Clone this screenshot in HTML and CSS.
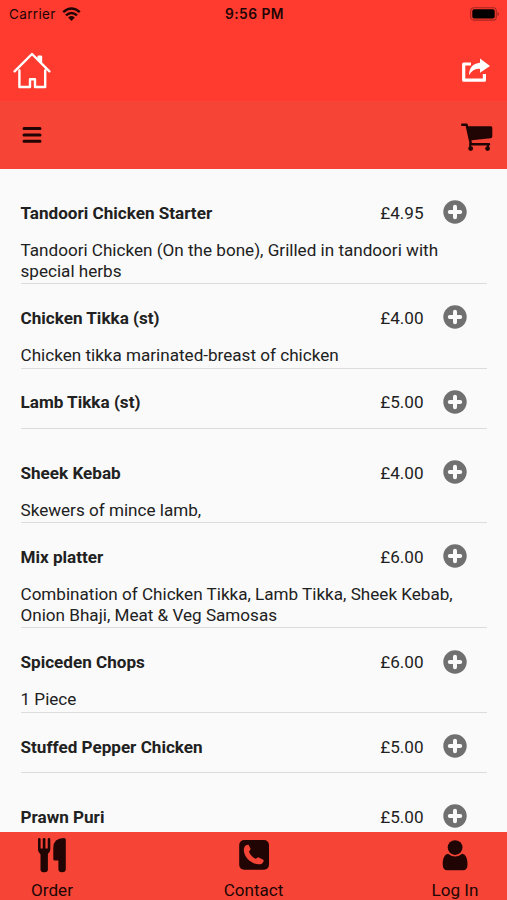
FILE: index.html
```html
<!DOCTYPE html>
<html lang="en">
<head>
<meta charset="utf-8">
<title>Menu</title>
<link rel="stylesheet" href="styles.css">
</head>
<body>
<svg class="defs" aria-hidden="true">
  <symbol id="plus" viewBox="0 0 24 24"><circle cx="12" cy="12" r="11.7" fill="#707070"/><path d="M12 6.8v10.4M6.8 12h10.4" stroke="#fafafa" stroke-width="4" stroke-linecap="round"/></symbol>
</svg>
<div class="app">
  <header class="top">
    <div class="status">
      <div class="carrier"><span>Carrier</span>
        <svg width="19" height="14" viewBox="0 0 19 14" fill="none" stroke="#210504" stroke-width="2.5"><path d="M1.2 5.1Q9.5-2.1 17.8 5.1M4 8.4Q9.5 3.6 15 8.4"/><path d="M6.2 10.5Q9.5 7.7 12.8 10.5L9.5 13.9Z" fill="#210504" stroke="none"/></svg>
      </div>
      <div class="time">9:56 PM</div>
      <svg class="battery" width="30" height="14" viewBox="0 0 30 14"><rect x=".7" y=".7" width="25.6" height="12.4" rx="3.2" fill="none" stroke="#a32720" stroke-width="1.1"/><rect x="2.3" y="2.3" width="22.4" height="9.2" rx="1.8" fill="#000"/><path d="M27.5 4.7q3.4 2.3 0 4.6z" fill="#a32720"/></svg>
    </div>
    <div class="nav">
      <svg width="38" height="37" viewBox="0 0 38 37" fill="none" stroke="#fff" stroke-width="2.4" stroke-linecap="round" stroke-linejoin="round"><path d="M1.6 19.3 19 2 36.4 19.3M28 10.5V4.8H25.6V8M6.4 18.5V35H17V27.2H22V35H32.2V18.5"/></svg>
      <svg width="29" height="25" viewBox="0 0 29 25"><path d="M10 6H2.7V22.2H23.4V16" fill="none" stroke="#fff" stroke-width="3.2" stroke-linejoin="round"/><path d="M19 .5 29 8 19 14.8V10.9C14 10.3 10.7 12.5 8 17.3 8 10 11.8 5.5 19 4.8Z" fill="#fff"/></svg>
    </div>
  </header>
  <div class="toolbar">
    <svg width="20" height="18" viewBox="0 0 20 18" stroke="#210504" stroke-width="3" stroke-linecap="round"><path d="M2 2.6h16M2 8.9h16M2 15.2h16"/></svg>
    <svg class="cart" width="33" height="29" viewBox="0 0 33 29"><path d="M2.2 1.8H6.6L11 21.3H29" fill="none" stroke="#210504" stroke-width="2.5" stroke-linecap="round" stroke-linejoin="round"/><path d="M6.8 3.2H31Q32.4 3.3 32.3 5V13.5Q32.2 15 30.6 15.2L9.5 17.5Z" fill="#210504"/><path d="M10.2 20V25M28 21.3V25" stroke="#210504" stroke-width="2"/><circle cx="10.7" cy="25.6" r="2.4" fill="#210504"/><circle cx="27.6" cy="25.6" r="2.4" fill="#210504"/></svg>
  </div>
  <main class="list">
    <section class="item"><div class="row"><h2>Tandoori Chicken Starter</h2><span class="price">£4.95</span><svg class="add"><use href="#plus"/></svg></div><p>Tandoori Chicken (On the bone), Grilled in tandoori with<br>special herbs</p></section>
    <section class="item"><div class="row"><h2>Chicken Tikka (st)</h2><span class="price">£4.00</span><svg class="add"><use href="#plus"/></svg></div><p>Chicken tikka marinated-breast of chicken</p></section>
    <section class="item bare"><div class="row"><h2>Lamb Tikka (st)</h2><span class="price">£5.00</span><svg class="add"><use href="#plus"/></svg></div></section>
    <section class="item"><div class="row"><h2>Sheek Kebab</h2><span class="price">£4.00</span><svg class="add"><use href="#plus"/></svg></div><p>Skewers of mince lamb,</p></section>
    <section class="item"><div class="row"><h2>Mix platter</h2><span class="price">£6.00</span><svg class="add"><use href="#plus"/></svg></div><p>Combination of Chicken Tikka, Lamb Tikka, Sheek Kebab,<br>Onion Bhaji, Meat &amp; Veg Samosas</p></section>
    <section class="item"><div class="row"><h2>Spiceden Chops</h2><span class="price">£6.00</span><svg class="add"><use href="#plus"/></svg></div><p>1 Piece</p></section>
    <section class="item bare"><div class="row"><h2>Stuffed Pepper Chicken</h2><span class="price">£5.00</span><svg class="add"><use href="#plus"/></svg></div></section>
    <section class="item bare"><div class="row"><h2>Prawn Puri</h2><span class="price">£5.00</span><svg class="add"><use href="#plus"/></svg></div></section>
  </main>
  <footer class="tabs">
    <div class="tab">
      <svg width="34" height="36" viewBox="0 0 34 36" fill="#210504"><path d="M4.3 2.3V12Q4.3 15 7 16.5H11Q14 15 14 12V2.3" fill="none" stroke="#210504" stroke-width="2.6" stroke-linecap="round"/><path d="M4.5 11.5h9.3L12.5 17H5.8Z"/><path d="M9.1 2.3V14" stroke="#210504" stroke-width="2.7" stroke-linecap="round"/><rect x="5.5" y="14" width="7.4" height="21.3" rx="3"/><path d="M29 1Q30.8 1 30.8 3V32Q30.8 35.3 27.1 35.3T23.4 32V23.5H20Q18.3 23.5 18.3 22V11Q18.3 1 29 1Z"/></svg>
      <span>Order</span>
    </div>
    <div class="tab">
      <svg width="34" height="36" viewBox="0 0 34 36"><rect x="2.2" y="3" width="29.8" height="29.8" rx="5" fill="#210504"/><path d="M9.5 8.1 11.5 7.8Q12.5 9.5 13.7 12L12 14.8Q13.7 19.5 18.6 21.8L21.3 20.2 26.7 22.9Q26.5 26.2 23.5 27.2C16 28.7 5 19.4 7.1 11Q7.7 8.8 9.5 8.1Z" fill="#f64536"/></svg>
      <span>Contact</span>
    </div>
    <div class="tab">
      <svg width="34" height="36" viewBox="0 0 34 36" fill="#210504"><circle cx="17.1" cy="10.6" r="7.4"/><path d="M10 16.7Q17 22.5 24.2 16.7C28 17.2 29.5 22 29.5 27.2Q29.5 33.2 25 33.2H9.4Q4.7 33.2 4.7 27.2C4.7 22 6.3 17.2 10 16.7Z"/></svg>
      <span>Log In</span>
    </div>
  </footer>
</div>
</body>
</html>
```
FILE: styles.css
```css
* { box-sizing: border-box; }
body { margin: 0; font-family: Roboto, sans-serif; color: #212121; }
svg { display: block; flex: none; }
.defs { display: none; }
.app { height: 900px; display: flex; flex-direction: column; overflow: hidden; background: #fafafa; }
.top { flex: none; height: 101px; background: #ff3b30; }
.status { height: 27px; padding: 0 7px 0 9px; display: grid; grid-template-columns: 1fr auto 1fr; align-items: center; color: #210504; font-family: Inter, sans-serif; font-size: 13px; }
.carrier { display: flex; align-items: center; gap: 6px; font-size: 13.5px; letter-spacing: .35px; }
.time { font-size: 13.8px; font-weight: 600; letter-spacing: .45px; }
.battery { justify-self: end; }
.nav { display: flex; justify-content: space-between; align-items: center; padding: 25px 17px 0 13px; }
.toolbar { flex: none; height: 68px; background: #f64536; display: flex; justify-content: space-between; align-items: center; padding: 0 14px 0 22px; }
.cart { margin-top: 4px; }
.list { flex: 1; min-height: 0; overflow: hidden; padding: 10px 20px 0 20.5px; font-size: 17.1px; line-height: 20.8px; }
.item { padding: 23.8px 0 1.7px; border-bottom: 1px solid #dcdcdc; }
.row { display: flex; align-items: center; height: 21px; margin-bottom: 16.1px; padding-right: 20px; }
h2 { margin: 0; flex: 1; font-size: 17.1px; font-weight: 700; }
p { margin: 0; white-space: nowrap; }
.price { margin-right: 19.5px; }
.add { width: 24px; height: 24px; margin-top: -2.4px; }
.bare { padding-bottom: 0; margin-bottom: 10px; }
.bare .row { margin-bottom: 14.6px; }
.tabs { flex: none; height: 68.5px; background: #f64536; color: #210504; display: flex; justify-content: space-between; padding: 5px 20px 0 20px; }
.tab { width: 64px; display: flex; flex-direction: column; align-items: center; gap: 7px; font-size: 17.1px; line-height: 20px; }
```
